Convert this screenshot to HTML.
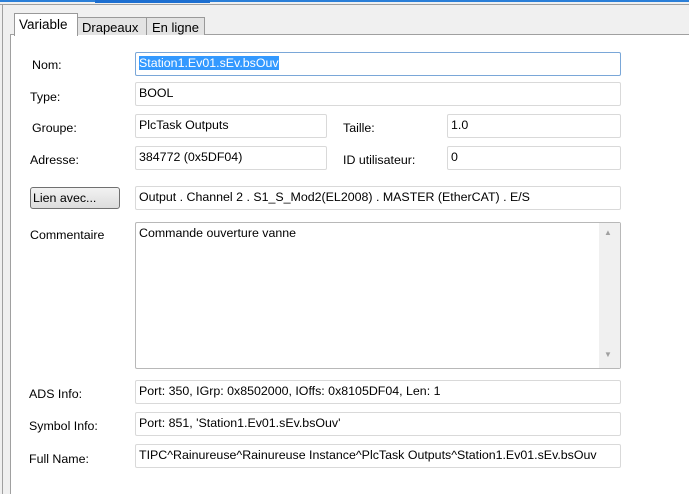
<!DOCTYPE html>
<html><head><style>
*{margin:0;padding:0;box-sizing:border-box}
body{width:689px;height:494px;background:#f0f0f0;position:relative;overflow:hidden;font-family:"Liberation Sans",sans-serif;font-size:12.4px;color:#000}
.a{position:absolute}
.lbl{position:absolute;white-space:nowrap}
.f{position:absolute;background:#fff;border:1px solid #d9d9d9;border-radius:2px;padding:3px 0 0 3px;white-space:nowrap;overflow:hidden}
</style></head><body>
<div class="a" style="left:0;top:0;width:689px;height:2px;background:#2b7fd8"></div>
<div class="a" style="left:95px;top:0;width:115px;height:3px;background:#1c6ed0"></div>
<div class="a" style="left:0;top:4px;width:689px;height:1px;background:#a0a0a0"></div>
<div class="a" style="left:2px;top:4px;width:1px;height:490px;background:#a0a0a0"></div>
<div class="a" style="left:10px;top:34px;width:679px;height:460px;background:#fff;border-left:1px solid #a0a0a0;border-top:1px solid #a0a0a0"></div>
<div class="a" style="left:76px;top:17px;width:129px;height:18px;background:#e3e3e3;border:1px solid #999;border-bottom:none"></div>
<div class="a" style="left:146px;top:17px;width:1px;height:18px;background:#999"></div>
<div class="lbl" style="left:82px;top:20px;font-size:13px">Drapeaux</div>
<div class="lbl" style="left:152px;top:20px;font-size:13px">En ligne</div>
<div class="a" style="left:14px;top:13px;width:64px;height:23px;background:#fff;border:1px solid #999;border-bottom:none"></div>
<div class="lbl" style="left:19px;top:17px;font-size:13.5px">Variable</div>

<div class="lbl" style="left:32px;top:58px">Nom:</div>
<div class="f" style="left:135px;top:52px;width:486px;height:24px;border-color:#7aa7d8"><span style="background:#3399ff;color:#fff">Station1.Ev01.sEv.bsOuv</span></div>
<div class="lbl" style="left:30px;top:90px">Type:</div>
<div class="f" style="left:135px;top:82px;width:486px;height:24px">BOOL</div>
<div class="lbl" style="left:32px;top:121px">Groupe:</div>
<div class="f" style="left:135px;top:114px;width:192px;height:24px">PlcTask Outputs</div>
<div class="lbl" style="left:343px;top:121px">Taille:</div>
<div class="f" style="left:447px;top:114px;width:174px;height:24px">1.0</div>
<div class="lbl" style="left:30px;top:153px">Adresse:</div>
<div class="f" style="left:135px;top:146px;width:192px;height:24px">384772 (0x5DF04)</div>
<div class="lbl" style="left:343px;top:153px">ID utilisateur:</div>
<div class="f" style="left:447px;top:146px;width:174px;height:24px">0</div>
<div class="a" style="left:30px;top:187px;width:90px;height:22px;border:1px solid #707070;border-radius:3px;background:linear-gradient(#f2f2f2,#dcdcdc);padding:3px 0 0 2px">Lien avec...</div>
<div class="f" style="left:135px;top:186px;width:486px;height:24px">Output . Channel 2 . S1_S_Mod2(EL2008) . MASTER (EtherCAT) . E/S</div>
<div class="lbl" style="left:30px;top:228px">Commentaire</div>
<div class="f" style="left:135px;top:222px;width:486px;height:147px;border-color:#b8b8b8">Commande ouverture vanne</div>
<div class="a" style="left:599px;top:223px;width:21px;height:145px;background:#f0f0f0"></div>
<div class="lbl" style="left:604px;top:228px;font-size:8px;color:#a0a0a0">▲</div>
<div class="lbl" style="left:604px;top:350px;font-size:8px;color:#a0a0a0">▼</div>
<div class="lbl" style="left:29px;top:387px">ADS Info:</div>
<div class="f" style="left:135px;top:380px;width:486px;height:24px">Port: 350, IGrp: 0x8502000, IOffs: 0x8105DF04, Len: 1</div>
<div class="lbl" style="left:29px;top:419px">Symbol Info:</div>
<div class="f" style="left:135px;top:412px;width:486px;height:24px">Port: 851, 'Station1.Ev01.sEv.bsOuv'</div>
<div class="lbl" style="left:29px;top:452px">Full Name:</div>
<div class="f" style="left:135px;top:444px;width:486px;height:24px">TIPC^Rainureuse^Rainureuse Instance^PlcTask Outputs^Station1.Ev01.sEv.bsOuv</div>
</body></html>
